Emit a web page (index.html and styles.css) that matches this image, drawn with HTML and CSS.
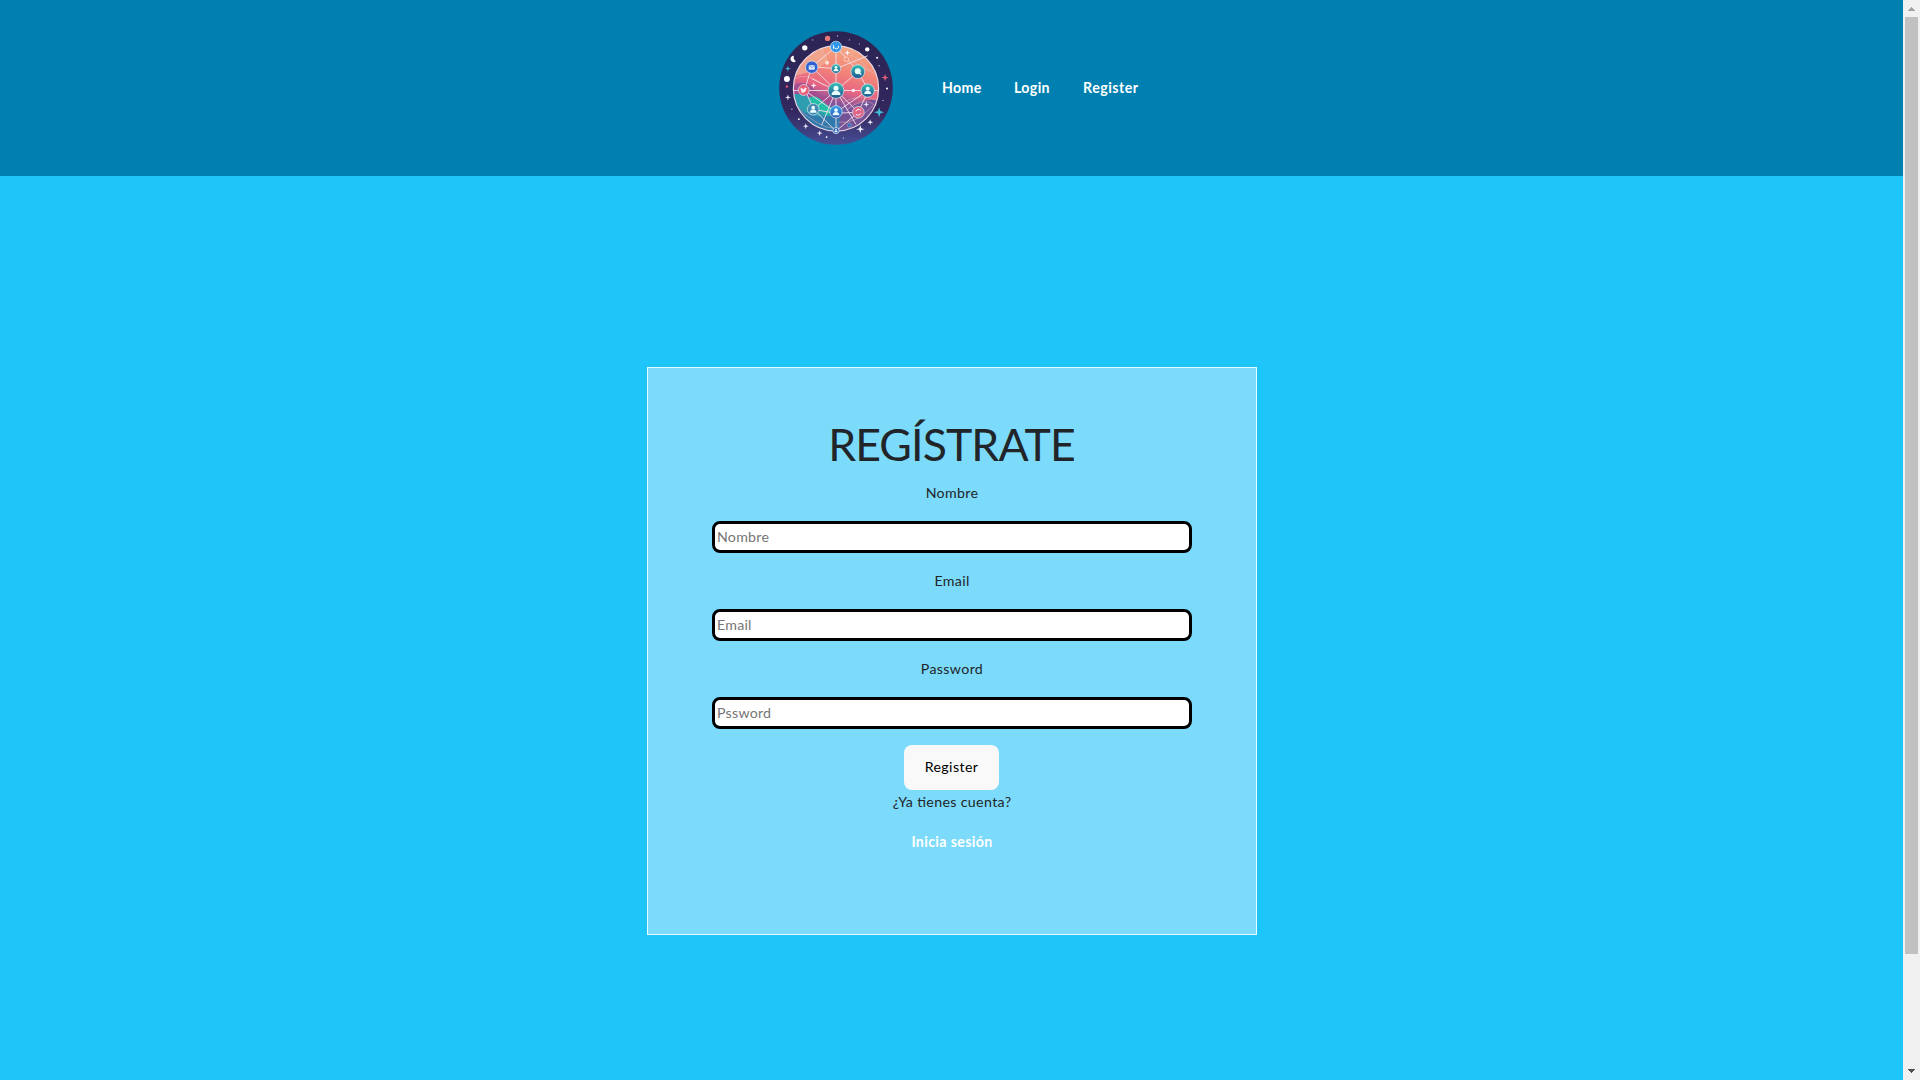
FILE: index.html
```html
<!DOCTYPE html>
<html lang="es">
<head>
<meta charset="utf-8">
<title>Regístrate</title>
<link rel="stylesheet" href="styles.css">
</head>
<body>
<div class="page">
  <header class="header">
    <svg class="logo" viewBox="0 0 115 115" aria-hidden="true">
      <defs>
        <linearGradient id="rim" x1="0" y1="0" x2="0" y2="1"><stop offset="0" stop-color="#2b2453"/><stop offset=".7" stop-color="#33275e"/><stop offset="1" stop-color="#464d94"/></linearGradient>
        <linearGradient id="sky" x1=".6" y1="0" x2=".35" y2="1"><stop offset="0" stop-color="#f4a982"/><stop offset=".28" stop-color="#f38578"/><stop offset=".5" stop-color="#e76482"/><stop offset=".66" stop-color="#86559c"/><stop offset=".85" stop-color="#3574ad"/><stop offset="1" stop-color="#3d9ac5"/></linearGradient>
        <linearGradient id="teal" x1="0" y1="0" x2="0" y2="1"><stop offset="0" stop-color="#38c0b5"/><stop offset="1" stop-color="#20538f"/></linearGradient>
        <linearGradient id="blue" x1="0" y1="0" x2="0" y2="1"><stop offset="0" stop-color="#35a5ed"/><stop offset="1" stop-color="#3155b5"/></linearGradient>
        <clipPath id="globe"><circle cx="57.5" cy="58" r="43"/></clipPath>
        <g id="person" fill="#e9ffff"><circle cy="-2" r="2.2"/><path d="M-4 4c0-5 8-5 8 0z"/></g>
        <path id="star" d="M0-3 .7-.7 3 0 .7.7 0 3-.7.7-3 0-.7-.7z"/>
      </defs>
      <circle cx="57.5" cy="57.5" r="57.3" fill="url(#rim)"/>
      <circle cx="57.5" cy="58" r="43" fill="url(#sky)"/>
      <g clip-path="url(#globe)">
        <path d="M12 28 40 12l10 18-14 10-22 6z" fill="#efaa91" opacity=".8"/>
        <path d="M12 56q14-8 22 2t20 8l-8 16-34-12z" fill="#a44e91"/>
        <path d="M12 64q12-2 21 5t25 9l-6 12q-25-2-40-20z" fill="#2d9daf"/>
        <path d="M12 72q20 20 46 12v20H30z" fill="#2f79ad"/>
        <path d="M29 68q8-5 15 3l12 9-7 5q-10-5-20-17z" fill="#23c0a8"/>
        <path d="M62 86q20-20 40-16l-4 22-38 10z" fill="#735298"/>
        <path d="M65 72q17-10 34-2M68 80q18-15 29-5M60 92q17 3 35-17M15 74q25 24 40 24M15 48q15-7 30 7M18 33q12-12 25-16l5 10M66 23q17 2 23 17l12 4M75 20q-8 12 19 20" fill="none" stroke="#eab8bd" stroke-width=".7" opacity=".7"/>
      </g>
      <circle cx="57.5" cy="58" r="43" fill="none" stroke="#e9d6e2" stroke-width="1.2"/>
      <path d="M57.5 16v85M14 60h86M57.5 16 33 36 26 59 35 79 57.5 101 80 82 90 60 80 41zM33 36l24.500 24L80 82M35 79l22.500-19L80 41M57.500 60 33 48M57.500 38 33 36M57.500 38l32-13M57.500 60l20 34M57.500 60 43 95M57.500 82 26 60M57.500 82l32-22M35 79l22 4 23-1" fill="none" stroke="#f4dfe9" stroke-width=".9"/>
      <g stroke="#d8eaf4" stroke-width=".7">
        <circle cx="57.500" cy="16" r="5.700" fill="#3197e9"/><circle cx="33" cy="36.500" r="6.200" fill="#315fd0"/><circle cx="57.500" cy="38" r="4.700" fill="url(#teal)"/><circle cx="79.500" cy="41" r="7" fill="url(#teal)"/>
        <circle cx="25" cy="59.500" r="5.500" fill="#e85c75"/><circle cx="57.500" cy="60" r="8" fill="url(#teal)"/><circle cx="89.500" cy="60" r="6.700" fill="url(#teal)"/>
        <circle cx="34.500" cy="79" r="5.900" fill="#4589b0"/><circle cx="57.500" cy="81.500" r="6.200" fill="url(#blue)"/><circle cx="80" cy="82" r="5.900" fill="#df6485"/><circle cx="57.500" cy="100.500" r="3.200" fill="#3c65ba"/>
      </g>
      <use href="#person" transform="translate(57.500 60) scale(1.150)"/><use href="#person" transform="translate(89.500 60) scale(.9)"/><use href="#person" transform="translate(57.500 38) scale(.65)"/><use href="#person" transform="translate(57.500 81.500) scale(.85)"/><use href="#person" transform="translate(34.500 79) scale(.85)"/><use href="#person" transform="translate(57.500 100.500) scale(.4)"/>
      <path d="M30 34.500h6v4.500h-6z" fill="#e6f6ff"/><path d="m30 34.500 3 2.600 3-2.600" fill="none" stroke="#315fd0" stroke-width=".7"/>
      <circle cx="79.500" cy="40.500" r="3" fill="#e2fff8"/><path d="m81 42 2 2" stroke="#e2fff8" stroke-width="1.400"/>
      <path d="m22 57 3 2 1-2 2 .5-1 3q-2 3-5 1l1-1q-2-1-1-3.500" fill="#ffe8f1"/>
      <path d="M55 14a3 3 0 0 0 5 3M60 17v-2M55 16v2M77.500 81a3 3 0 0 1 5-1M82.500 83a3 3 0 0 1-5 1" fill="none" stroke="#eaf5ff" stroke-width="1"/>
      <circle cx="48.500" cy="32" r="2" fill="#ffe2d9"/><circle cx="68" cy="28.500" r="2.300" fill="#ef957f" stroke="#ffe2d9" stroke-width=".7"/><circle cx="75" cy="60" r="1.700" fill="#ffe9f2"/><circle cx="71" cy="95" r="1.900" fill="#3869b0" stroke="#9bcbea" stroke-width=".5"/>
      <g fill="#fff"><circle cx="26" cy="17" r="2.700"/><circle cx="89" cy="18.500" r="2.200"/><circle cx="8" cy="48.500" r="3"/><path d="M15 25a3.200 3.200 0 1 0 2 5.500q-3-2-2-5.500"/><circle cx="99" cy="27" r="1"/><circle cx="109" cy="58" r="1"/><circle cx="48" cy="107" r=".9"/><circle cx="20" cy="89" r=".9"/></g>
      <circle cx="49" cy="7.500" r="2.700" fill="#e87879"/><circle cx="8" cy="56" r="1.300" fill="#e05079"/>
      <g fill="#f5f0ff"><use href="#star" x="9" y="67"/><use href="#star" x="27" y="96"/><use href="#star" x="41" y="103"/><use href="#star" transform="translate(82 99) scale(1.400)"/><use href="#star" x="92" y="92"/><use href="#star" x="69" y="22"/><use href="#star" x="35" y="55"/><use href="#star" x="88" y="74"/></g>
      <g fill="#42bdd8"><use href="#star" x="9" y="38"/><use href="#star" transform="translate(101 82) scale(1.700)"/></g><use href="#star" transform="translate(107 47) scale(1.200)" fill="#e86078"/>
      <g fill="#bcb8e4"><circle cx="34" cy="9" r=".6"/><circle cx="59" cy="5" r=".7"/><circle cx="71" cy="9" r=".7"/><circle cx="81" cy="13" r=".6"/><circle cx="101" cy="35" r=".7"/><circle cx="105" cy="70" r=".7"/><circle cx="13" cy="79" r=".7"/><circle cx="65" cy="108" r=".7"/></g>
    </svg>
    <nav class="nav">
      <a class="nav-home">Home</a>
      <a class="nav-login">Login</a>
      <a class="nav-register">Register</a>
    </nav>
  </header>
  <main class="main">
    <form class="card">
      <h1 class="title">REGÍSTRATE</h1>
      <label class="label" for="name">Nombre</label>
      <input class="field" id="name" type="text" placeholder="Nombre">
      <label class="label" for="email">Email</label>
      <input class="field" id="email" type="email" placeholder="Email">
      <label class="label" for="password">Password</label>
      <input class="field" id="password" type="password" placeholder="Pssword">
      <button class="submit" type="button">Register</button>
      <p class="question">¿Ya tienes cuenta?</p>
      <a class="signin">Inicia sesión</a>
    </form>
  </main>
</div>
<div class="scrollbar" aria-hidden="true">
  <svg class="arrow" viewBox="0 0 17 17" shape-rendering="crispEdges"><path d="M8 7h1v1h1v1h1v1h1v1H5v-1h1V9h1V8h1z" fill="#a3a3a3"/></svg>
  <div class="thumb"></div>
  <svg class="arrow" viewBox="0 0 17 17" shape-rendering="crispEdges"><path d="M5 6h7v1h-1v1h-1v1H9v1H8V9H7V8H6V7H5z" fill="#505050"/></svg>
</div>
</body>
</html>
```

FILE: styles.css
```css
* { box-sizing: border-box; }

body {
  margin: 0;
  height: 1080px;
  display: flex;
  overflow: hidden;
  background: #1dc5f8;
  color: #212529;
  font: 14.2px/24px Lato, "Liberation Sans", sans-serif;
  font-feature-settings: "liga";
  letter-spacing: .35px;
}

.page {
  flex: 1;
  display: flex;
  flex-direction: column;
}

.header {
  height: 176px;
  padding-left: 779px;
  display: flex;
  align-items: center;
  background: #0080b1;
}

.logo { width: 114px; height: 114px; }

.nav {
  display: flex;
  gap: 32px;
  margin-left: 49px;
  color: #fff;
  font-weight: 700;
}

.nav a { white-space: nowrap; }
.nav-home { width: 40px; }
.nav-login { width: 37px; }

.nav-register { letter-spacing: .5px; }

.main {
  padding: 191px 0 0 1px;
  display: flex;
  justify-content: center;
}

.card {
  width: 610px;
  height: 568px;
  padding: 46px 64px 0;
  border: 1px solid #e8faff;
  background: #7cdafa;
  display: flex;
  flex-direction: column;
  align-items: center;
}

.title {
  margin: 0 0 7px;
  padding-right: 1px;
  font-size: 44.6px;
  line-height: 60px;
  font-weight: 400;
  letter-spacing: -.9px;
}

.label { margin-bottom: 16px; }

.field {
  width: 480px;
  height: 32px;
  margin: 0 0 16px;
  padding: 0 2px 2px;
  border: 3px solid #000;
  border-radius: 8px;
  background: #fff;
  font: inherit;
  letter-spacing: .25px;
}

.field::placeholder { color: #757575; opacity: 1; }

.submit {
  width: 95px;
  height: 45px;
  margin-right: 1px;
  padding: 0 0 1px;
  border: 0;
  border-radius: 8px;
  background: #f9f9f9;
  color: #000;
  font: inherit;
  letter-spacing: .4px;
}

.question { margin: 0 0 16px; }

.signin { color: #fff; font-weight: 700; }

.scrollbar {
  width: 17px;
  height: 1080px;
  background: #f1f1f1;
  display: flex;
  flex-direction: column;
  align-items: center;
}

.arrow { width: 17px; height: 17px; }
.thumb { width: 13px; height: 937px; margin-bottom: auto; background: #c1c1c1; }
```
